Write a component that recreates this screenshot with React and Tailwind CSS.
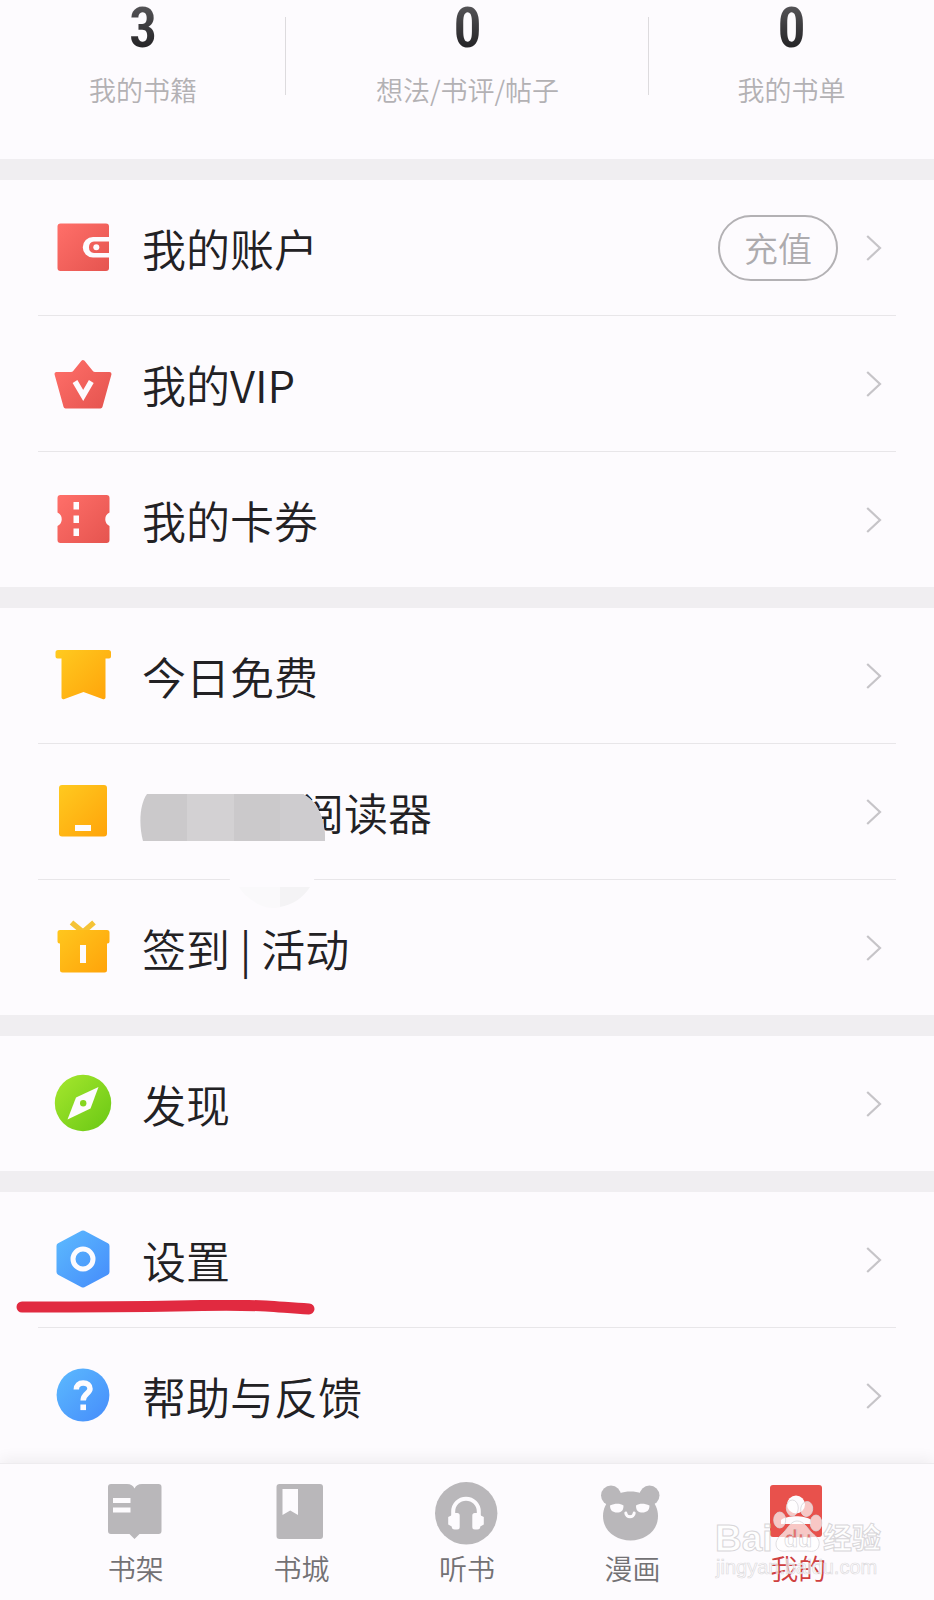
import React from "react";

const GRADIENTS = {
  red: ["#ff6f69", "#e5544f"],
  yellow: ["#ffc91f", "#ffa30a"],
  green: ["#a2e52c", "#6cc915"],
  blue: ["#5bb8fe", "#468dfb"],
};

function RowIcon({ tone, children }) {
  const [from, to] = GRADIENTS[tone];
  const id = React.useId();
  return (
    <svg viewBox="0 0 60 60" className="size-[60px] shrink-0" aria-hidden="true">
      <defs>
        <linearGradient id={id} x1="5" y1="5" x2="55" y2="55" gradientUnits="userSpaceOnUse">
          <stop offset="0" stopColor={from} />
          <stop offset="1" stopColor={to} />
        </linearGradient>
      </defs>
      {children(`url(#${id})`)}
    </svg>
  );
}

const PAPER = "#fdfbfe";

const WalletIcon = () => (
  <RowIcon tone="red">
    {(fill) => (
      <>
        <rect x="4.500" y="5.500" width="51.500" height="47.500" rx="3" fill={fill} />
        <path d="M57 19H40a10 10 0 0 0 0 20.500h17v-4.500H41a5.800 5.800 0 0 1 0-11.500h16z" fill={PAPER} />
        <circle cx="43.300" cy="29.300" r="3" fill={PAPER} />
      </>
    )}
  </RowIcon>
);

const CrownIcon = () => (
  <RowIcon tone="red">
    {(fill) => (
      <>
        <path
          d="M30 8L38.500 18.500C39.500 19.700 40.500 20 42 20H56.500L47.500 52.500H12.500L3.500 20H18C19.500 20 20.500 19.700 21.500 18.500Z"
          fill={fill}
          stroke={fill}
          strokeWidth="4"
          strokeLinejoin="round"
        />
        <path d="M22 27.500L30.200 41.500L38.300 27.500" fill="none" stroke={PAPER} strokeWidth="5.500" />
      </>
    )}
  </RowIcon>
);

const TicketIcon = () => (
  <RowIcon tone="red">
    {(fill) => (
      <>
        <path
          d="M7.500 5H53.500a3 3 0 0 1 3 3V22.500a7.500 7.500 0 0 0 0 13.500V50a3 3 0 0 1-3 3H7.500a3 3 0 0 1-3-3V36a7.500 7.500 0 0 0 0-13.500V8a3 3 0 0 1 3-3z"
          fill={fill}
        />
        <path d="M20.500 12h5.500v7.500h-5.500zM20.500 25.500h5.500v7.500h-5.500zM20.500 38.500h5.500v7.500h-5.500z" fill={PAPER} />
      </>
    )}
  </RowIcon>
);

const BannerIcon = () => (
  <RowIcon tone="yellow">
    {(fill) => (
      <path
        d="M5 4H55.500a2.500 2.500 0 0 1 2.500 2.500V10.500a2 2 0 0 1-2 2H52.500V51.500a2 2 0 0 1-3 1.500L30.500 46L11.500 53a2 2 0 0 1-3-1.500V12.500H4.500a2 2 0 0 1-2-2V6.500A2.500 2.500 0 0 1 5 4z"
        fill={fill}
      />
    )}
  </RowIcon>
);

const ReaderIcon = () => (
  <RowIcon tone="yellow">
    {(fill) => (
      <>
        <rect x="6" y="3" width="48" height="51.500" rx="3" fill={fill} />
        <rect x="22" y="43" width="16" height="6" fill={PAPER} />
      </>
    )}
  </RowIcon>
);

const GiftIcon = () => (
  <RowIcon tone="yellow">
    {(fill) => (
      <>
        <path d="M18.500 4.500L30 14L41 4.500" fill="none" stroke="#f5c336" strokeWidth="5.500" strokeLinejoin="round" />
        <path
          d="M7 12H54a2.500 2.500 0 0 1 2.500 2.500V23.500a2 2 0 0 1-2 2H54V52a2.500 2.500 0 0 1-2.500 2.500H9.500a2.500 2.500 0 0 1-2.500-2.500V25.500H6.500a2 2 0 0 1-2-2V14.500A2.500 2.500 0 0 1 7 12z"
          fill={fill}
        />
        <rect x="27" y="27" width="6" height="18" fill={PAPER} />
      </>
    )}
  </RowIcon>
);

const CompassIcon = () => (
  <RowIcon tone="green">
    {(fill) => (
      <>
        <circle cx="30" cy="29" r="28.200" fill={fill} />
        <path d="M45.500 13L37.500 34.500L14.500 45.500L23 23.500Z" fill={PAPER} />
        <circle cx="30.200" cy="29.200" r="3.200" fill="#86d520" />
      </>
    )}
  </RowIcon>
);

const SettingsIcon = () => (
  <RowIcon tone="blue">
    {(fill) => (
      <>
        <path
          d="M30 3.500L53.500 16V42L30 54.500L6.500 42V16Z"
          fill={fill}
          stroke={fill}
          strokeWidth="6"
          strokeLinejoin="round"
        />
        <circle cx="30" cy="29" r="10" fill="none" stroke={PAPER} strokeWidth="5" />
      </>
    )}
  </RowIcon>
);

const HelpIcon = () => (
  <RowIcon tone="blue">
    {(fill) => (
      <>
        <circle cx="30" cy="29" r="26.400" fill={fill} />
        <path
          d="M23.300 23.500C23.300 19.300 26 17 30.200 17C34.400 17 37 19.300 37 22.800C37 27.500 30.200 27.500 30.200 34.500"
          fill="none"
          stroke={PAPER}
          strokeWidth="5.500"
        />
        <rect x="27.400" y="38.500" width="5.600" height="5.600" fill={PAPER} />
      </>
    )}
  </RowIcon>
);

const Chevron = () => (
  <svg viewBox="0 0 16 26" className="h-[26px] w-4 shrink-0" fill="none" stroke="#c6c4c8" strokeWidth="2.200" aria-hidden="true">
    <path d="M1.200 1L14 13L1.200 25" />
  </svg>
);

function Mosaic() {
  return (
    <svg viewBox="0 0 190 118" className="h-[118px] w-[190px]" aria-hidden="true">
      <path d="M3 44H186V64C184 72 180 78 178 82C170 104 152 116 134 115C114 114 100 102 88 80C60 76 20 70 3 44Z" fill="#fdfbfe" />
      <path d="M101 94H143V114C136 116 128 115 122 112C112 107 105 101 101 94Z" fill="#faf9fb" />
      <path d="M142 94H172C165 105 154 112 142 114Z" fill="#f4f3f5" />
      <path d="M9 1H165C178 8 187 22 187 48H5C1 34 1 12 9 1Z" fill="#cbc9cb" />
      <path d="M49 1H96V48H49Z" fill="#d3d1d3" />
      <path d="M142 1H165C178 8 187 22 187 48H142Z" fill="#cecccf" />
    </svg>
  );
}

function PenStroke() {
  return (
    <svg viewBox="0 0 300 18" className="pointer-events-none absolute -left-[22px] bottom-[9px] h-[18px] w-[300px]" fill="none" aria-hidden="true">
      <path d="M6 7C60 7 110 7 160 6C200 5 225 5 250 6C266 7 275 8 293 9" stroke="#e12a40" strokeWidth="11" strokeLinecap="round" strokeLinejoin="round" />
    </svg>
  );
}

function Row({ icon: Icon, label, masked, action, underlined }) {
  return (
    <li className="relative mx-[38px] flex h-[136px] items-center border-b border-[#e8e6e9] pr-[14px] pl-[15px] last:h-[135px] last:border-b-0">
      <Icon />
      <a href="#" className="ml-[29px] flex flex-1 items-center text-[44px] leading-[60px] font-[350] text-[#222124]">
        {masked && <span className="w-[158px]" />}
        {label}
      </a>
      {masked && (
        <div className="absolute top-[49px] left-[100px]">
          <Mosaic />
        </div>
      )}
      {action && (
        <button
          type="button"
          className="mr-7 h-[66px] rounded-full border-2 border-[#b3b1b4] px-6 text-[34px] leading-none font-[350] text-[#adabae]"
        >
          {action}
        </button>
      )}
      <Chevron />
      {underlined && <PenStroke />}
    </li>
  );
}

const GROUPS = [
  [
    { icon: WalletIcon, label: "我的账户", action: "充值" },
    { icon: CrownIcon, label: "我的VIP" },
    { icon: TicketIcon, label: "我的卡券" },
  ],
  [
    { icon: BannerIcon, label: "今日免费" },
    { icon: ReaderIcon, label: "阅读器", masked: true },
    { icon: GiftIcon, label: "签到 | 活动" },
  ],
  [{ icon: CompassIcon, label: "发现" }],
  [
    { icon: SettingsIcon, label: "设置", underlined: true },
    { icon: HelpIcon, label: "帮助与反馈" },
  ],
];

const STATS = [
  { value: "3", label: "我的书籍" },
  { value: "0", label: "想法/书评/帖子" },
  { value: "0", label: "我的书单" },
];

const GREY = "#b9b7ba";

const TABS = [
  {
    label: "书架",
    icon: (
      <>
        <path
          d="M7 2H23C27 2 29 3.500 30.500 6.500C32 3.500 34 2 38 2H54.500a3 3 0 0 1 3 3V49a3 3 0 0 1-3 3H35.500L30.500 57L25.500 52H7a3 3 0 0 1-3-3V5a3 3 0 0 1 3-3z"
          fill={GREY}
        />
        <path d="M9 16H26.500V21H9zM9 25.500H26.500V30.500H9z" fill={PAPER} />
      </>
    ),
  },
  {
    label: "书城",
    icon: (
      <>
        <rect x="7.500" y="2" width="46.500" height="55" rx="3" fill={GREY} />
        <path d="M13.500 7H29V33L21.200 28.500L13.500 33Z" fill={PAPER} />
      </>
    ),
  },
  {
    label: "听书",
    icon: (
      <>
        <circle cx="31.200" cy="31.300" r="31.200" fill={GREY} />
        <path d="M18.200 34V29.500a12.800 12.800 0 0 1 25.600 0V34" fill="none" stroke={PAPER} strokeWidth="4" />
        <path
          d="M18.200 31H22.200a2.500 2.500 0 0 1 2.500 2.500V45a2.500 2.500 0 0 1-2.500 2.500H19.700a3 3 0 0 1-3-3L13.200 42.500V35L16.200 33.500zM43.800 31H39.800a2.500 2.500 0 0 0-2.500 2.500V45a2.500 2.500 0 0 0 2.500 2.500H42.300a3 3 0 0 0 3-3L48.800 42.500V35L45.800 33.500z"
          fill={PAPER}
        />
      </>
    ),
  },
  {
    label: "漫画",
    icon: (
      <>
        <circle cx="10" cy="13.500" r="10" fill={GREY} />
        <circle cx="48.500" cy="13.500" r="10" fill={GREY} />
        <path d="M29.500 9.500C45 9.500 57 20 57 34C57 49 44 58.500 29.500 58.500C15 58.500 2 49 2 34C2 20 14 9.500 29.500 9.500Z" fill={GREY} />
        <path d="M9 23.500C14 21 19 21 22.500 23.500C22.500 29 20 30.500 16 30.500C12 30.500 9 28.500 9 23.500ZM48.500 23.500C43.500 21 38.500 21 35 23.500C35 29 37.500 30.500 41.500 30.500C45.500 30.500 48.500 28.500 48.500 23.500Z" fill={PAPER} />
        <path d="M24.800 31C25 36 33 36 33.200 31" fill="none" stroke={PAPER} strokeWidth="3" strokeLinecap="round" />
      </>
    ),
  },
  {
    label: "我的",
    active: true,
    icon: (
      <>
        <rect x="4" y="3" width="52" height="52" rx="3" fill="#e8514c" />
        <circle cx="30" cy="22.500" r="9" fill={PAPER} />
        <path d="M15 42V38C21 33 39 33 45 38V42Z" fill={PAPER} />
      </>
    ),
  },
];

function Watermark() {
  return (
    <svg
      viewBox="0 0 180 100"
      className="pointer-events-none absolute right-11 bottom-[10px] h-[100px] w-[180px]"
      aria-hidden="true"
      stroke="#d8d6d9"
      fill="#ffffff"
    >
      <defs>
        <linearGradient id="du-fill" x1="0" y1="40" x2="0" y2="60" gradientUnits="userSpaceOnUse">
          <stop offset="0.350" stopColor="#e4716d" />
          <stop offset="0.400" stopColor="#ffffff" />
        </linearGradient>
      </defs>
      <g strokeWidth="0.800" fillOpacity="0.680">
        <ellipse cx="69.700" cy="30" rx="6" ry="8" />
        <ellipse cx="82.300" cy="18" rx="6" ry="8" />
        <ellipse cx="96.700" cy="19" rx="6" ry="7.500" transform="rotate(8 96.700 19)" />
        <ellipse cx="106" cy="33" rx="5.800" ry="8" />
        <path d="M87 31C94 31 97 38 102 43C107 47 110 50 109 55C108 61 103 62 98 61H77C71 62 66 60 66 54C66 49 70 46 74 42C78 38 81 31 87 31Z" />
      </g>
      <g className="font-['Liberation_Sans','Noto_Sans_CJK_SC',sans-serif] font-bold" strokeWidth="1">
        <text x="5" y="61" fontSize="37" fillOpacity="0.900">Bai</text>
        <text x="74" y="57" fontSize="23" fill="url(#du-fill)" strokeWidth="0.700">du</text>
        <text x="113" y="59" fontSize="29" fillOpacity="0.900">经验</text>
      </g>
      <text
        x="6"
        y="84"
        fontSize="20"
        fillOpacity="0.600"
        stroke="#dedcdf"
        strokeWidth="0.700"
        className="font-['Liberation_Sans',sans-serif] font-normal"
      >
        jingyan.baidu.com
      </text>
    </svg>
  );
}

export default function App() {
  return (
    <div className="flex min-h-screen flex-col bg-[#fdfbfe] font-['Noto_Sans_CJK_SC',sans-serif] font-[350]">
      <main className="flex-1">
        <section className="grid grid-cols-[286fr_363fr_285fr] pb-[49px]">
          {STATS.map(({ value, label }, i) => (
            <div key={label} className="relative flex flex-col items-center">
              <span className="bg-linear-to-b from-[#5c5b5e] to-[#1c1b1e] bg-clip-text font-['Roboto_Condensed','Liberation_Sans_Narrow','Roboto',sans-serif] text-[56px] leading-[56px] font-semibold text-transparent">
                {value}
              </span>
              <span className="mt-[14px] text-[27px] leading-10 text-[#b3b1b4]">{label}</span>
              {i < 2 && <span className="absolute top-[17px] right-0 h-[78px] w-px bg-[#dddbde]" />}
            </div>
          ))}
        </section>
        {GROUPS.map((rows) => (
          <ul key={rows[0].label} className="border-t-[21px] border-[#f0eef1]">
            {rows.map((row) => (
              <Row key={row.label} {...row} />
            ))}
          </ul>
        ))}
      </main>
      <nav className="relative flex border-t border-[#eeecef] bg-[#fdfbfe] px-[53px] pt-[18px] pb-[18px] shadow-[0_-4px_14px_rgba(0,0,0,0.06)]">
        {TABS.map(({ label, icon, active }) => (
          <a key={label} href="#" className="flex flex-1 flex-col items-center gap-2">
            <svg viewBox="0 0 64 64" className="size-16" aria-hidden="true">
              {icon}
            </svg>
            <span className={active ? "text-[28px] leading-7 text-[#cf4040]" : "text-[28px] leading-7 text-[#737174]"}>
              {label}
            </span>
          </a>
        ))}
        <Watermark />
      </nav>
    </div>
  );
}
